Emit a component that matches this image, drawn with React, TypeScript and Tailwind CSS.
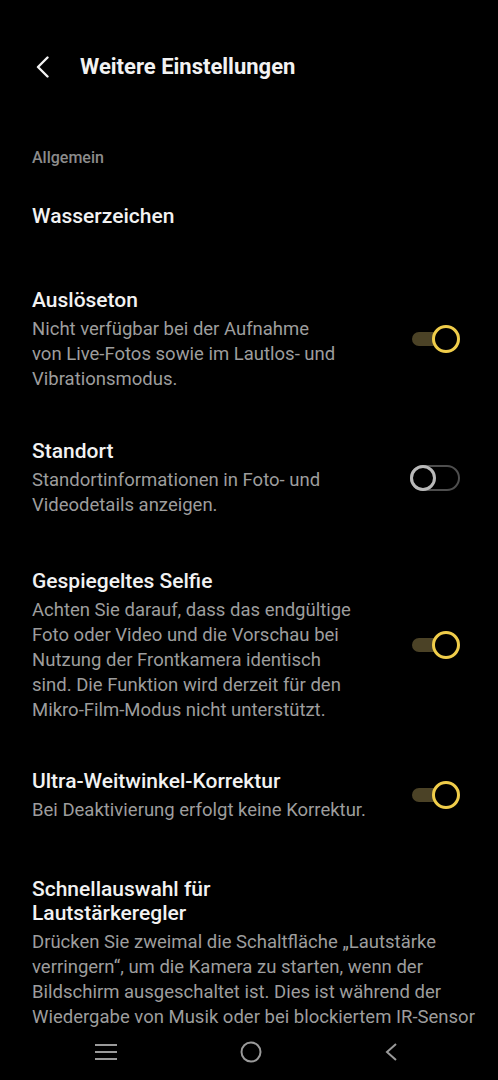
import { ReactNode } from "react";

type TToggleProps = {
  on: boolean;
};

function Toggle({ on }: TToggleProps) {
  if (on) {
    return (
      <div className="relative h-[28px] w-[48px] shrink-0">
        <div className="absolute left-0 top-[7px] h-[14px] w-[36px] rounded-full bg-[#4b4226]" />
        <div className="absolute right-0 top-0 h-[28px] w-[28px] rounded-full border-[3px] border-[#f0cd4a] bg-black" />
      </div>
    );
  }
  return (
    <div className="relative h-[26px] w-[50px] shrink-0">
      <div className="absolute inset-0 rounded-full border-[2.5px] border-[#4e4e4e]" />
      <div className="absolute left-0 top-0 h-[26px] w-[26px] rounded-full border-[3px] border-[#b9b9b9] bg-black" />
    </div>
  );
}

type TRowProps = {
  title: ReactNode;
  desc?: ReactNode;
  toggle?: boolean;
  className?: string;
};

function Row({ title, desc, toggle, className }: TRowProps) {
  return (
    <div className={"flex items-center justify-between pl-8 pr-[38px] " + (className || "")}>
      <div className="flex-1 whitespace-nowrap">
        <div className="text-[21px] font-medium leading-[26px] text-[#f2f2f2]">{title}</div>
        {desc && (
          <div className="mt-[3.5px] text-[18.5px] leading-[25px] text-[#9d9d9d]">{desc}</div>
        )}
      </div>
      {toggle !== undefined && <Toggle on={toggle} />}
    </div>
  );
}

export default function App() {
  return (
    <div
      className="flex h-[1080px] w-[498px] flex-col overflow-hidden bg-black"
      style={{ fontFamily: "Roboto, 'Noto Sans', sans-serif" }}
    >
      {/* header */}
      <div className="flex items-center pt-[54px]">
        <div className="flex w-[80px] pl-[36px]">
          <svg width="14" height="22" viewBox="0 0 14 22" fill="none">
            <path d="M11.5 1.5 L2 11 L11.5 20.5" stroke="#f2f2f2" strokeWidth="2.4" strokeLinecap="round" strokeLinejoin="round" />
          </svg>
        </div>
        <h1 className="text-[22px] font-bold leading-[26px] text-[#f2f2f2]">Weitere Einstellungen</h1>
      </div>

      <div className="flex-1 overflow-hidden">
        <div className="mt-[68px] pl-8 text-[16px] font-medium leading-[20px] text-[#8c8c8c]">Allgemein</div>

        <div className="mt-[35px] pl-8 text-[21px] font-medium leading-[26px] text-[#f2f2f2]">Wasserzeichen</div>

        <Row
          className="mt-[58px]"
          title="Auslöseton"
          desc={<>Nicht verfügbar bei der Aufnahme<br />von Live-Fotos sowie im Lautlos- und<br />Vibrationsmodus.</>}
          toggle={true}
        />

        <Row
          className="mt-[46.5px]"
          title="Standort"
          desc={<>Standortinformationen in Foto- und<br />Videodetails anzeigen.</>}
          toggle={false}
        />

        <Row
          className="mt-[50.5px]"
          title="Gespiegeltes Selfie"
          desc={<>Achten Sie darauf, dass das endgültige<br />Foto oder Video und die Vorschau bei<br />Nutzung der Frontkamera identisch<br />sind. Die Funktion wird derzeit für den<br />Mikro-Film-Modus nicht unterstützt.</>}
          toggle={true}
        />

        <Row
          className="mt-[45.5px]"
          title="Ultra-Weitwinkel-Korrektur"
          desc="Bei Deaktivierung erfolgt keine Korrektur."
          toggle={true}
        />

        <div className="mt-[54.5px] pl-8 pr-[18px]">
          <div className="text-[21px] font-medium leading-[24px] text-[#f2f2f2]">
            Schnellauswahl für<br />Lautstärkeregler
          </div>
          <div className="mt-[4.5px] whitespace-nowrap text-[18.5px] leading-[25px] text-[#9d9d9d]">
            Drücken Sie zweimal die Schaltfläche „Lautstärke<br />
            verringern“, um die Kamera zu starten, wenn der<br />
            Bildschirm ausgeschaltet ist. Dies ist während der<br />
            Wiedergabe von Musik oder bei blockiertem IR-Sensor
          </div>
        </div>
      </div>

      {/* nav bar */}
      <div className="flex h-[52px] shrink-0 items-center justify-between bg-black pb-[4px] pl-[94px] pr-[100px]">
        <svg width="24" height="18" viewBox="0 0 24 18">
          <path d="M1 2 H23 M1 9 H23 M1 16 H23" stroke="#9a9a9a" strokeWidth="2" />
        </svg>
        <svg width="24" height="24" viewBox="0 0 24 24">
          <circle cx="12" cy="12" r="9.5" stroke="#9a9a9a" strokeWidth="2" fill="none" />
        </svg>
        <svg width="14" height="20" viewBox="0 0 14 20">
          <path d="M12 2 L3 10 L12 18" stroke="#9a9a9a" strokeWidth="2" fill="none" />
        </svg>
      </div>
    </div>
  );
}
